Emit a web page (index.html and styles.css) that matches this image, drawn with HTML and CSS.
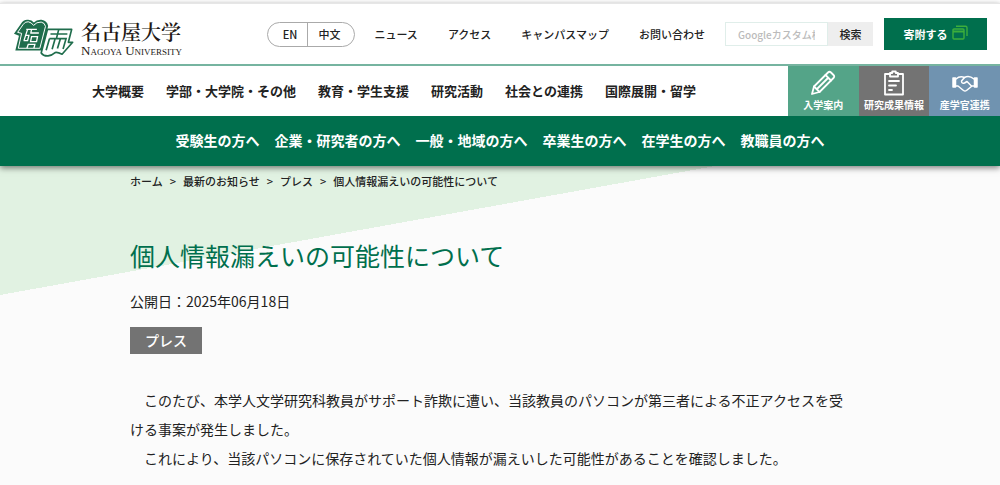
FILE: index.html
```html
<!DOCTYPE html>
<html lang="ja">
<head>
    <meta charset="UTF-8">
    <meta name="viewport" content="width=device-width, initial-scale=1.0">
    <title>個人情報漏えいの可能性について</title>
    <link rel="stylesheet" href="styles.css">
</head>
<body>
    <header class="header">
        <div class="header-top">
            <a class="logo" href="#">
                <svg class="logo-mark" viewBox="40 54 184 120" aria-hidden="true">
                    <path d="M43 101 L64 71 Q72 57 86 59 Q97 60 103 67 Q111 58 126 59 Q143 61 146 78 L128 152 L47 152 L58 107 Z" fill="#1f6d4c"/>
                    <path d="M54 97 L70 74 Q76 64 86 65 Q96 67 102 76 Q111 65 125 66 Q136 68 138 79 L121 145 L56 145 L66 100 Z" fill="none" stroke="#fff" stroke-width="3"/>
                    <path d="M80 88 H112 M84 88 L73 122 M76 106 H88 L84 122 H72 M96 88 L94 98 M92 99 H118 M96 110 H114 L111 125 H93 Z M82 145 L86 133 H106 L103 145" fill="none" stroke="#fff" stroke-width="4"/>
                    <path d="M144 88 H217 L207 127 H220 L188 163 Q174 156 167 158 Q158 166 146 168 Q132 169 125 159 Z" fill="#fff" stroke="#1f6d4c" stroke-width="5" stroke-linejoin="round"/>
                    <path d="M153 102 H204 M178 88 L171 116 M150 116 H200 L191 147 M150 116 L140 151 M167 116 L158 148 M183 116 L174 146" fill="none" stroke="#1f6d4c" stroke-width="5"/>
                </svg>
                <span class="logo-text">
                    <span class="logo-ja">名古屋大学</span>
                    <span class="logo-en">Nagoya University</span>
                </span>
            </a>
            <div class="lang">
                <a href="#">EN</a>
                <a href="#">中文</a>
            </div>
            <nav class="sub-nav">
                <a href="#">ニュース</a>
                <a href="#">アクセス</a>
                <a href="#">キャンパスマップ</a>
                <a href="#">お問い合わせ</a>
            </nav>
            <form class="search">
                <input type="text" placeholder="Googleカスタム検索" aria-label="サイト内検索">
                <button type="submit">検索</button>
            </form>
            <a class="donate" href="#">
                寄附する
                <svg width="16" height="15" viewBox="0 0 16 15" fill="none" stroke="#3cae3c" stroke-width="1.4" aria-hidden="true">
                    <rect x="1" y="4" width="11" height="10" rx="1"/>
                    <path d="M1 6.5 H12" stroke-width="2"/>
                    <path d="M4 1.2 H13.5 Q15 1.2 15 2.7 V11"/>
                </svg>
            </a>
        </div>
        <div class="header-main">
            <nav class="main-nav">
                <a href="#">大学概要</a>
                <a href="#">学部・大学院・その他</a>
                <a href="#">教育・学生支援</a>
                <a href="#">研究活動</a>
                <a href="#">社会との連携</a>
                <a href="#">国際展開・留学</a>
            </nav>
            <div class="tiles">
                <a class="tile tile-green" href="#">
                    <svg width="26" height="26" viewBox="0 0 26 26" fill="none" stroke="#fff" stroke-width="1.8" stroke-linejoin="round" stroke-linecap="round" aria-hidden="true">
                        <path d="M2 24 L4 16.5 L18 2.5 Q19.5 1 21 2.5 L23.5 5 Q25 6.5 23.5 8 L9.5 22 Z"/>
                        <path d="M15.5 5 L21 10.5 M4 16.5 L9.5 22 M7 19 L17.5 8.5"/>
                    </svg>
                    入学案内
                </a>
                <a class="tile tile-gray" href="#">
                    <svg width="26" height="26" viewBox="0 0 26 26" fill="none" stroke="#fff" stroke-width="1.8" stroke-linejoin="round" stroke-linecap="round" aria-hidden="true">
                        <path d="M9 4 H4 V24.5 H22 V4 H17"/>
                        <path d="M9 6.5 V3 H11.2 V1.5 H14.8 V3 H17 V6.5 Z"/>
                        <path d="M8 11 H18 M8 15.5 H15 M8 20 H11"/>
                    </svg>
                    研究成果情報
                </a>
                <a class="tile tile-blue" href="#">
                    <svg width="26" height="26" viewBox="0 0 26 26" fill="none" stroke="#fff" stroke-width="1.5" stroke-linejoin="round" stroke-linecap="round" aria-hidden="true">
                        <path d="M1 8 H3.5 V17 H1 Z M22.5 8 H25 V17 H22.5 Z" fill="#fff"/>
                        <path d="M4 9 Q8 5.5 12.5 7.5 Q17 5 22 9 M4 16 H6 L11.5 20.5 Q13 21.5 14.5 20.5 L20 16 H22"/>
                        <path d="M12.5 7.5 L9.5 11 Q9.5 14 12.5 13 L15 11.5 L19.5 16"/>
                    </svg>
                    産学官連携
                </a>
            </div>
        </div>
        <nav class="target-nav">
            <a href="#">受験生の方へ</a>
            <a href="#">企業・研究者の方へ</a>
            <a href="#">一般・地域の方へ</a>
            <a href="#">卒業生の方へ</a>
            <a href="#">在学生の方へ</a>
            <a href="#">教職員の方へ</a>
        </nav>
    </header>

    <main class="main">
        <div class="container">
            <nav class="breadcrumb">
                <a href="#">ホーム</a>
                <span>&gt;</span>
                <a href="#">最新のお知らせ</a>
                <span>&gt;</span>
                <a href="#">プレス</a>
                <span>&gt;</span>
                <span>個人情報漏えいの可能性について</span>
            </nav>
            <h1>個人情報漏えいの可能性について</h1>
            <p class="date">公開日：2025年06月18日</p>
            <span class="category">プレス</span>
            <div class="article">
                <p>　このたび、本学人文学研究科教員がサポート詐欺に遭い、当該教員のパソコンが第三者による不正アクセスを受ける事案が発生しました。</p>
                <p>　これにより、当該パソコンに保存されていた個人情報が漏えいした可能性があることを確認しました。</p>
            </div>
        </div>
    </main>
</body>
</html>
```

FILE: styles.css
```css
* {
    box-sizing: border-box;
}
body {
    margin: 0;
    padding-top: 3px;
    background: #fff;
    color: #222;
    font-family: "Noto Sans CJK JP", sans-serif;
    font-size: 14px;
}
a {
    color: inherit;
    text-decoration: none;
    white-space: nowrap;
}
.header {
    position: relative;
    z-index: 1;
    background: #fff;
    border-top: 1px solid #e6e6e6;
    box-shadow: 0 2px 6px rgba(0, 0, 0, 0.5);
}
.header-top {
    display: flex;
    align-items: center;
    height: 62px;
    padding: 0 13px;
    border-bottom: 2px solid #76b4a0;
    font-size: 11px;
    font-weight: 500;
}
.logo {
    display: flex;
    align-items: center;
    gap: 7px;
    margin-top: 8px;
    margin-right: auto;
}
.logo-mark {
    width: 61px;
    height: 40px;
}
.logo-text {
    display: flex;
    flex-direction: column;
    color: #231815;
}
.logo-ja {
    font-family: "Noto Serif CJK JP", "Noto Sans CJK JP", serif;
    font-size: 20px;
    font-weight: 600;
    line-height: 26px;
}
.logo-en {
    font-family: "Liberation Serif", serif;
    font-size: 13px;
    font-variant: small-caps;
    line-height: 12px;
}
.lang {
    display: flex;
    margin-right: 19px;
    border: 1px solid #aaa;
    border-radius: 13px;
    line-height: 23px;
}
.lang a {
    padding: 0 14px 0 10px;
}
.lang a:first-child {
    padding: 0 10px 0 15px;
    border-right: 1px solid #aaa;
}
.sub-nav {
    display: flex;
    gap: 30px;
    margin-right: 20px;
}
.search {
    display: flex;
    height: 24px;
    margin-right: 11px;
}
.search input {
    width: 103px;
    padding: 0 12px;
    border: 1px solid #e0eeea;
    font-family: inherit;
    font-size: 10px;
    font-weight: 500;
}
.search input::placeholder {
    color: #bbb;
}
.search button {
    width: 45px;
    padding: 0;
    border: none;
    background: #eee;
    color: #222;
    font-family: inherit;
    font-size: 11px;
    font-weight: 500;
    cursor: pointer;
}
.donate {
    display: flex;
    justify-content: center;
    align-items: center;
    gap: 4px;
    width: 103px;
    height: 32px;
    background: #006f4d;
    color: #fff;
    font-weight: bold;
}
.donate svg {
    margin-bottom: 4px;
}
.header-main {
    display: flex;
    justify-content: space-between;
    height: 50px;
    padding-left: 92px;
}
.main-nav {
    display: flex;
    align-items: center;
    gap: 22px;
    padding-bottom: 2px;
    font-size: 13px;
    font-weight: bold;
}
.tiles {
    display: flex;
    width: 212px;
}
.tile {
    display: flex;
    flex: 1;
    flex-direction: column;
    align-items: center;
    padding-top: 4px;
    color: #fff;
    font-size: 10px;
    font-weight: bold;
    line-height: 18px;
}
.tile-green {
    background: #54a488;
}
.tile-gray {
    background: #737373;
}
.tile-blue {
    background: #7093b0;
}
.target-nav {
    display: flex;
    justify-content: center;
    align-items: center;
    gap: 15px;
    height: 50px;
    padding-bottom: 2px;
    background: #006f4d;
    color: #fff;
    font-size: 14px;
    font-weight: bold;
}
.main {
    min-height: calc(100vh - 166px);
    background: #fbfbfb linear-gradient(to bottom right, #e1f2e2 50%, transparent 50%) no-repeat 0 0 / 71.5% 129px;
}
.container {
    max-width: 740px;
    margin: 0 auto;
    padding-top: 6px;
}
.breadcrumb {
    display: flex;
    gap: 7px;
    font-size: 11px;
    font-weight: 500;
    line-height: 18px;
}
h1 {
    margin: 46px 0 0;
    color: #006f4d;
    font-size: 25px;
    font-weight: normal;
    line-height: 38px;
}
.date {
    margin: 17px 0 0;
    line-height: 20px;
}
.category {
    display: inline-block;
    margin-top: 16px;
    padding: 0 15px;
    background: #737373;
    color: #fff;
    font-weight: 500;
    line-height: 27px;
}
.article {
    max-width: 726px;
    margin-top: 32px;
    line-height: 29px;
}
.article p {
    margin: 0;
}
```
